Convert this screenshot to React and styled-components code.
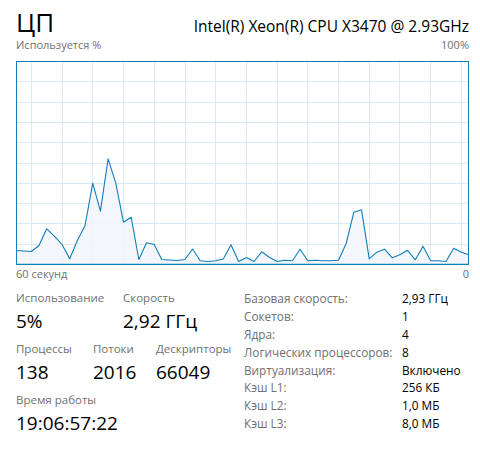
import React from "react";
import styled, { createGlobalStyle } from "styled-components";

const Global = createGlobalStyle`
  html, body { margin: 0; padding: 0; background: #ffffff; }
  body { font-family: "Open Sans", "Noto Sans", sans-serif; color: #000; }
`;

const Page = styled.div`
  width: 480px;
  height: 463px;
  box-sizing: border-box;
  padding: 0 11px 0 16px;
  overflow: hidden;
`;

const Header = styled.div`
  display: flex;
  justify-content: space-between;
  align-items: baseline;
  box-sizing: border-box;
  height: 37px;
  padding-top: 8px;
`;

const Title = styled.div`
  font-size: 26px;
  line-height: 29px;
  font-weight: 400;
`;

const CpuName = styled.div`
  font-size: 15.5px;
  line-height: 29px;
`;

const CaptionRow = styled.div`
  display: flex;
  justify-content: space-between;
  box-sizing: border-box;
  font-size: 11px;
  line-height: 15px;
  color: #707070;
  height: ${(p) => p.$h || 15}px;
  padding-top: ${(p) => p.$pt || 0}px;
`;

const ChartSvg = styled.svg`
  display: block;
  margin-top: 9px;
`;

const Stats = styled.div`
  display: grid;
  grid-template-columns: 228px 1fr;
  margin-top: 8px;
`;

const LeftStats = styled.div`
  display: flex;
  flex-direction: column;
  gap: 5px;
`;

const StatRow = styled.div`
  display: flex;
`;

const Stat = styled.div`
  display: flex;
  flex-direction: column;
  min-width: ${(p) => p.$w || 0}px;
`;

const StatLabel = styled.div`
  font-size: 11.5px;
  line-height: 16px;
  color: #707070;
  white-space: nowrap;
`;

const StatValue = styled.div`
  font-size: 19px;
  line-height: 30px;
  color: #000;
  white-space: nowrap;
`;

const InfoTable = styled.div`
  display: grid;
  grid-template-columns: 158px 1fr;
  grid-auto-rows: 17.9px;
  font-size: 11.8px;
  line-height: 16px;
`;

const InfoLabel = styled.div`
  color: #707070;
  white-space: nowrap;
`;

const InfoValue = styled.div`
  color: #000;
  white-space: nowrap;
`;

const ys = [250, 250.5, 251, 245, 228.3, 235.7, 244, 258.3, 240, 225, 182.7, 210.7, 158.3, 182.7, 221.7, 216.7, 259, 242.3, 244, 259, 259.5, 260, 259, 248.5, 260.3, 261, 260.3, 258.5, 244.3, 261, 257, 261, 251.3, 256.7, 261, 259.7, 260.3, 248.7, 260.3, 259.7, 260.3, 260.3, 259.7, 243, 211.7, 209.3, 258.3, 251.7, 248.7, 257.3, 254.3, 249.8, 259.3, 245.7, 260.2, 260.3, 261, 247.7, 251.8, 254];

function Chart() {
  const W = 452;
  const H = 203;
  const pts = ys.map((y, i) => {
    const x = Math.min(W, Math.max(0, 15.3 + 7.68 * (i - 2)));
    return [x.toFixed(2), (y - 61 + 0.5).toFixed(2)];
  });
  const line = pts.map((p, i) => (i ? "L" : "M") + p[0] + " " + p[1]).join(" ");
  const area = line + ` L${W} ${H} L0 ${H} Z`;
  const vlines = [];
  for (let j = 0; j < 15; j++) vlines.push(15.5 + Math.round(30.7 * j));
  const hlines = [];
  for (let i = 1; i < 10; i++) hlines.push(Math.round(20.3 * i) + 0.5);
  return (
    <ChartSvg width={W + 1} height={H + 1} viewBox={`0 0 ${W + 1} ${H + 1}`}>
      <defs>
        <clipPath id="plot">
          <rect x="0.5" y="0.5" width={W} height={H} />
        </clipPath>
      </defs>
      <g clipPath="url(#plot)">
        {vlines.map((x) => (
          <line key={"v" + x} x1={x} y1={0} x2={x} y2={H} stroke="#d9eaf4" strokeWidth="1" />
        ))}
        {hlines.map((y) => (
          <line key={"h" + y} x1={0} y1={y} x2={W} y2={y} stroke="#d9eaf4" strokeWidth="1" />
        ))}
        <path d={area} fill="#f1f6fa" fillOpacity="0.85" />
        <path d={line} fill="none" stroke="#117dbb" strokeWidth="1.1" strokeLinejoin="round" />
      </g>
      <rect x="0.5" y="0.5" width={W} height={H} fill="none" stroke="#117dbb" strokeWidth="1" />
      <line x1="0" y1={H + 0.5} x2={W + 1} y2={H + 0.5} stroke="#117dbb" strokeWidth="1.4" />
    </ChartSvg>
  );
}

const info = [
  ["Базовая скорость:", "2,93 ГГц"],
  ["Сокетов:", "1"],
  ["Ядра:", "4"],
  ["Логических процессоров:", "8"],
  ["Виртуализация:", "Включено"],
  ["Кэш L1:", "256 КБ"],
  ["Кэш L2:", "1,0 МБ"],
  ["Кэш L3:", "8,0 МБ"],
];

export default function App() {
  return (
    <>
      <Global />
      <Page>
        <Header>
          <Title>ЦП</Title>
          <CpuName>Intel(R) Xeon(R) CPU X3470 @ 2.93GHz</CpuName>
        </Header>
        <CaptionRow>
          <span>Используется %</span>
          <span>100%</span>
        </CaptionRow>
        <Chart />
        <CaptionRow $h={17} $pt={1}>
          <span>60 секунд</span>
          <span>0</span>
        </CaptionRow>
        <Stats>
          <LeftStats>
            <StatRow>
              <Stat $w={107}>
                <StatLabel>Использование</StatLabel>
                <StatValue>5%</StatValue>
              </Stat>
              <Stat>
                <StatLabel>Скорость</StatLabel>
                <StatValue>2,92 ГГц</StatValue>
              </Stat>
            </StatRow>
            <StatRow>
              <Stat $w={77}>
                <StatLabel>Процессы</StatLabel>
                <StatValue>138</StatValue>
              </Stat>
              <Stat $w={63}>
                <StatLabel>Потоки</StatLabel>
                <StatValue>2016</StatValue>
              </Stat>
              <Stat>
                <StatLabel>Дескрипторы</StatLabel>
                <StatValue>66049</StatValue>
              </Stat>
            </StatRow>
            <StatRow>
              <Stat>
                <StatLabel>Время работы</StatLabel>
                <StatValue>19:06:57:22</StatValue>
              </Stat>
            </StatRow>
          </LeftStats>
          <InfoTable>
            {info.map(([l, v]) => (
              <React.Fragment key={l}>
                <InfoLabel>{l}</InfoLabel>
                <InfoValue>{v}</InfoValue>
              </React.Fragment>
            ))}
          </InfoTable>
        </Stats>
      </Page>
    </>
  );
}
